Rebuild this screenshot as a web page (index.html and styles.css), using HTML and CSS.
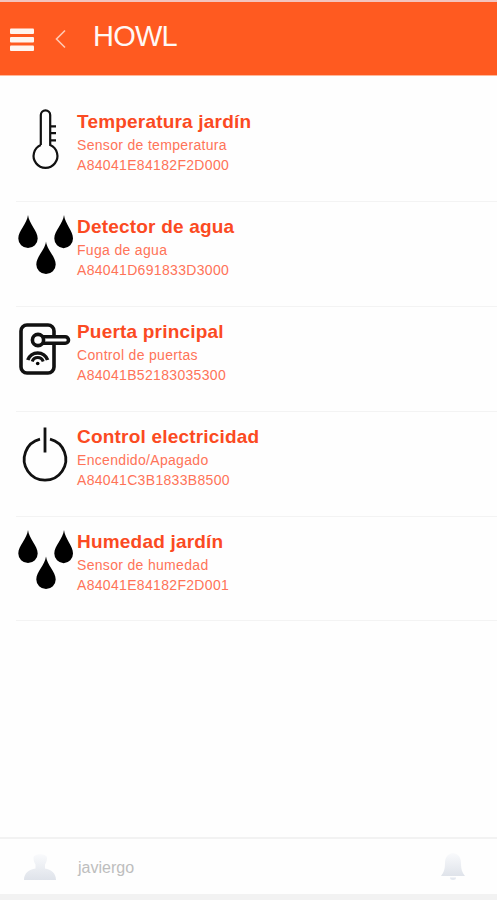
FILE: index.html
```html
<!DOCTYPE html>
<html lang="es">

<head>
    <meta charset="UTF-8">
    <meta name="viewport" content="width=device-width, initial-scale=1.0">
    <title>HOWL</title>
    <link rel="stylesheet" href="styles.css">
</head>

<body>
    <header>
        <svg class="menu-icon" width="24" height="24" viewBox="0 0 24 24">
            <rect x="0" y="0.5" width="24" height="5.5" rx="1" />
            <rect x="0" y="9" width="24" height="5.5" rx="1" />
            <rect x="0" y="17.5" width="24" height="5.5" rx="1" />
        </svg>
        <svg class="back-icon" width="12" height="20" viewBox="0 0 12 20">
            <path d="M10 1.5L1.5 10L10 18.5" />
        </svg>
        <h1>HOWL</h1>
    </header>

    <main>
        <!-- Devices -->
        <div class="device">
            <svg class="device-icon" viewBox="0 0 60 64">
                <path class="line" d="M24.8 38V8a4.700 4.700 0 0 1 9.400 0V38a11.900 11.900 0 1 1 -9.400 0" />
                <path class="line" d="M34 19.400h6M34 26.200h6M34 33.300h6" />
            </svg>
            <div class="device-info">
                <h2>Temperatura jardín</h2>
                <p class="type">Sensor de temperatura</p>
                <p class="code">A84041E84182F2D000</p>
            </div>
        </div>

        <div class="device">
            <svg class="device-icon" viewBox="0 0 60 64">
                <path d="M12 3C13 12 21.700 18.500 21.700 26.500a9.700 9.500 0 0 1-19.400 0C2.300 18.500 11 12 12 3z" />
                <path d="M48 3C49 12 57 18.500 57 26.500a9.200 9.500 0 0 1-18.700 0C38.300 18.500 47 12 48 3z" />
                <path d="M30 29.500C31 38 39.700 44.500 39.700 52.500a9.700 9.500 0 0 1-19.400 0C20.300 44.500 29 38 30 29.500z" />
            </svg>
            <div class="device-info">
                <h2>Detector de agua</h2>
                <p class="type">Fuga de agua</p>
                <p class="code">A84041D691833D3000</p>
            </div>
        </div>

        <div class="device">
            <svg class="device-icon" viewBox="0 0 60 64">
                <path class="thick" d="M38 19V14a6 6 0 0 0-6-6H11a6 6 0 0 0-6 6V50a6 6 0 0 0 6 6H32a6 6 0 0 0 6-6V27" />
                <circle class="thick" cx="22" cy="23" r="5.600" />
                <path class="thick" d="M27 19.700H49.200a3.300 3.300 0 0 1 0 6.600H27" />
                <path class="thick" d="M11.800 43a10.500 10.500 0 0 1 19.800 0" />
                <path class="wave" d="M16.200 44.500a5.800 5.800 0 0 1 11 0" />
                <circle cx="21.700" cy="46.500" r="1.800" />
            </svg>
            <div class="device-info">
                <h2>Puerta principal</h2>
                <p class="type">Control de puertas</p>
                <p class="code">A84041B52183035300</p>
            </div>
        </div>

        <div class="device">
            <svg class="device-icon" viewBox="0 0 60 64">
                <path class="power" d="M24 17.200a20.800 20.800 0 1 0 10 0" />
                <path class="power" d="M29 5.500V30.500" />
            </svg>
            <div class="device-info">
                <h2>Control electricidad</h2>
                <p class="type">Encendido/Apagado</p>
                <p class="code">A84041C3B1833B8500</p>
            </div>
        </div>

        <div class="device">
            <svg class="device-icon" viewBox="0 0 60 64">
                <path d="M12 3C13 12 21.700 18.500 21.700 26.500a9.700 9.500 0 0 1-19.400 0C2.300 18.500 11 12 12 3z" />
                <path d="M48 3C49 12 57 18.500 57 26.500a9.200 9.500 0 0 1-18.700 0C38.300 18.500 47 12 48 3z" />
                <path d="M30 29.500C31 38 39.700 44.500 39.700 52.500a9.700 9.500 0 0 1-19.400 0C20.300 44.500 29 38 30 29.500z" />
            </svg>
            <div class="device-info">
                <h2>Humedad jardín</h2>
                <p class="type">Sensor de humedad</p>
                <p class="code">A84041E84182F2D001</p>
            </div>
        </div>
    </main>

    <footer>
        <svg class="user-icon" width="34" height="30" viewBox="0 0 34 30">
            <defs>
                <linearGradient id="fade" x1="0" y1="0" x2="0" y2="1">
                    <stop offset="0" stop-color="#f9fafc" />
                    <stop offset="1" stop-color="#dfe3ea" />
                </linearGradient>
            </defs>
            <path fill="url(#fade)" d="M10.500 5C10.500 0 24 0 24 5C24 8 23 10 22 11.500V15.500C28 16.500 33 20 33 27H1C1 20 6 16.500 12.500 15.500V11.500C11.500 10 10.500 8 10.500 5z" />
        </svg>
        <span class="user-name">javiergo</span>
        <svg class="bell-icon" width="26" height="30" viewBox="0 0 26 30">
            <path fill="url(#fade)" d="M13 0C19 1 21 5 21 10C21 16 22 19 25 23H1C4 19 5 16 5 10C5 5 7 1 13 0z" />
            <path fill="#e4e8ef" d="M10 24.500h6a3 2.500 0 0 1-6 0z" />
        </svg>
    </footer>
</body>

</html>
```
FILE: styles.css
```css
* {
    box-sizing: border-box;
}

body {
    font-family: "Liberation Sans", Arial, sans-serif;
    margin: 0;
    height: 900px;
    display: flex;
    flex-direction: column;
    background-color: #fefefe;
    overflow: hidden;
}

header {
    height: 76px;
    display: flex;
    align-items: center;
    padding: 0 10px;
    background-color: #ff5a20;
    border-top: 2px solid #f3c4bd;
    border-bottom: 1px solid #ffb899;
}

.menu-icon {
    fill: #fff5f0;
    margin-top: 3px;
}

.back-icon {
    fill: none;
    stroke: #ffc9b3;
    stroke-width: 1.6;
    margin: 0 0 0 21px;
}

h1 {
    margin: 0 0 4px 26px;
    font-size: 29px;
    font-weight: normal;
    letter-spacing: -0.8px;
    color: #fff8f5;
}

main {
    flex: 1;
    padding: 21px 0 0 16px;
}

.device {
    height: 104.9px;
    display: flex;
    padding-top: 10px;
    border-bottom: 1px solid #f3f3f3;
}

.device-icon {
    width: 60px;
    height: 64px;
    fill: #000;
}

.line,
.thick,
.wave,
.power {
    fill: none;
    stroke: #111;
    stroke-width: 2.2;
}

.thick {
    stroke-width: 3.6;
}

.wave {
    stroke-width: 3;
}

.power {
    stroke-width: 2.8;
}

.device-info {
    padding: 4px 0 0 1px;
    color: #ff7358;
    white-space: nowrap;
}

h2 {
    margin: 0;
    font-size: 19px;
    line-height: 22px;
    letter-spacing: 0.2px;
    color: #fb4a22;
}

p {
    margin: 0;
    font-size: 14px;
    letter-spacing: 0.32px;
}

.type {
    padding-top: 2px;
    line-height: 21px;
}

.code {
    line-height: 19px;
}

footer {
    height: 63px;
    display: flex;
    align-items: center;
    padding: 2px 31px 0 23px;
    border-top: 2px solid #f2f2f2;
    border-bottom: 6px solid #f2f2f2;
}

.user-name {
    flex: 1;
    margin-left: 21px;
    font-size: 16px;
    color: #bdbdbd;
}
```
